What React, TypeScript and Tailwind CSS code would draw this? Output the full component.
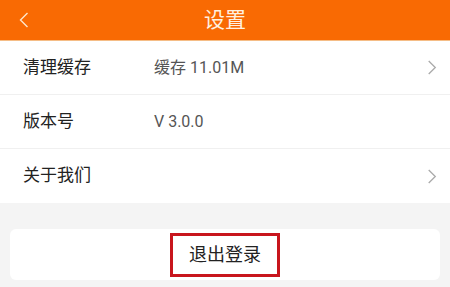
const rows = [
  { label: '清理缓存', value: '缓存 11.01M', arrow: true },
  { label: '版本号', value: 'V 3.0.0', arrow: false },
  { label: '关于我们', value: '', arrow: true },
]

function Chevron({ dir, className }: { dir: 'left' | 'right'; className: string }) {
  return (
    <svg viewBox="0 0 10 16" className={className} fill="none" stroke="currentColor" strokeWidth={1.4}>
      {dir === 'right' ? <polyline points="1.5,1 8.5,8 1.5,15" /> : <polyline points="8.5,1 1.5,8 8.5,15" />}
    </svg>
  )
}

export default function App() {
  return (
    <div
      className="w-[450px] h-[287px] bg-[#f4f4f4] overflow-hidden"
      style={{ fontFamily: 'Roboto, "Noto Sans CJK SC", sans-serif' }}
    >
      <header className="relative h-[41px] bg-[#f96a03] flex items-center justify-center border-b border-[#f5bd86]">
        <Chevron dir="left" className="absolute left-[19px] top-[12px] w-[10px] h-[16px] text-[#fde6cc]" />
        <h1 className="text-[21px] text-[#fff1e0] leading-none">设置</h1>
      </header>
      <div className="bg-white">
        {rows.map((r, i) => (
          <div
            key={r.label}
            className={`h-[54px] flex items-center pl-[23px] pr-[13px] ${i < rows.length - 1 ? 'border-b border-[#f0f0f0]' : ''}`}
          >
            <span className="w-[131px] text-[17px] text-[#222]">{r.label}</span>
            <span className="flex-1 text-[16px] text-[#555]">{r.value}</span>
            {r.arrow && <Chevron dir="right" className="w-[10px] h-[15px] text-[#aaa]" />}
          </div>
        ))}
      </div>
      <div className="px-[10px] pt-[26px]">
        <div className="h-[51px] bg-white rounded-[6px] flex items-center justify-center">
          <div className="w-[110px] h-[44px] border-[3px] border-[#c8151d] flex items-center justify-center">
            <span className="text-[18px] text-[#222]">退出登录</span>
          </div>
        </div>
      </div>
    </div>
  )
}
